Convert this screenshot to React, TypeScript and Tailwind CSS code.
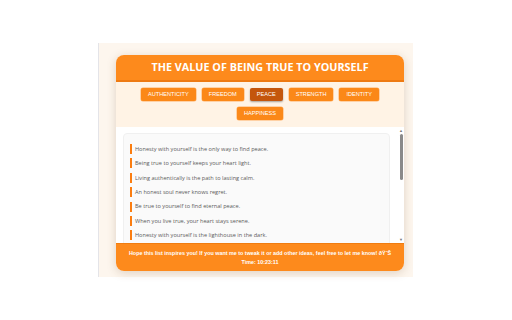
const TOPICS = ['Authenticity', 'Freedom', 'Peace', 'Strength', 'Identity', 'Happiness']

const LINES = [
  'Honesty with yourself is the only way to find peace.',
  'Being true to yourself keeps your heart light.',
  'Living authentically is the path to lasting calm.',
  'An honest soul never knows regret.',
  'Be true to yourself to find eternal peace.',
  'When you live true, your heart stays serene.',
  'Honesty with yourself is the lighthouse in the dark.',
]

function TopicButton({ label, active }: { label: string; active?: boolean }) {
  return (
    <button
      type="button"
      className={
        'h-[13px] rounded-[2px] px-[7px] text-[5.6px] uppercase leading-none text-white ' +
        (active
          ? 'bg-[#c4560c] shadow-[0_1px_2px_rgba(0,0,0,0.35)]'
          : 'bg-[#fb8818] shadow-[0_0_0_0.5px_#ffb066]')
      }
    >
      {label}
    </button>
  )
}

function Scrollbar() {
  return (
    <div className="flex w-[6px] shrink-0 flex-col items-center bg-white">
      <span className="mt-[1px] text-[4px] leading-[5px] text-[#777]">▲</span>
      <div className="mt-[1px] h-[46px] w-[3px] rounded-full bg-[#8a8a8a]" />
      <div className="flex-1" />
      <span className="mb-[1px] text-[4px] leading-[5px] text-[#777]">▼</span>
    </div>
  )
}

export default function App() {
  return (
    <div className="h-[320px] w-[512px] overflow-hidden bg-white pl-[98px] pt-[43px] [font-family:'Liberation_Sans',Arial,sans-serif]">
      <div className="h-[234px] w-[315px] border-l border-[#e4e4e8] bg-[#fdf6ee] pl-[17px] pt-[12px]">
        <div className="flex h-[216px] w-[288px] flex-col overflow-hidden rounded-[8px] bg-white shadow-[0_2px_10px_rgba(120,80,40,0.22)]">
          <header className="flex h-[27px] shrink-0 items-center justify-center border-b-2 border-[#ee7a12] bg-[#fd8a1c]">
            <h1 className="text-[10.8px] font-bold uppercase text-white [font-family:'Open_Sans',sans-serif]">
              The Value of Being True to Yourself
            </h1>
          </header>

          <div className="flex h-[45px] shrink-0 flex-wrap content-start justify-center gap-x-[6px] gap-y-[6px] bg-[#fff3e5] px-[20px] pt-[6px]">
            {TOPICS.map((t) => (
              <TopicButton key={t} label={t} active={t === 'Peace'} />
            ))}
          </div>

          <div className="flex h-[116px] shrink-0 overflow-hidden bg-white">
            <div className="flex-1 pl-[7px] pr-[8px] pt-[6px]">
              <ul className="flex flex-col gap-[4.4px] rounded-[4px] border border-[#f0f0f0] bg-[#fafafa] pl-[6px] pt-[10px] pb-[10px]">
                {LINES.map((l) => (
                  <li
                    key={l}
                    className="flex h-[10px] items-center border-l-2 border-[#fb7d10] pl-[3px] text-[5.6px] text-[#5a5a5a] [font-family:'Open_Sans',sans-serif]"
                  >
                    {l}
                  </li>
                ))}
              </ul>
            </div>
            <Scrollbar />
          </div>

          <footer className="flex flex-1 flex-col items-center justify-center border-t border-[#f07c10] bg-[#fd8a1c] text-[5.4px] font-bold leading-[9px] text-white">
            <p>Hope this list inspires you! If you want me to tweak it or add other ideas, feel free to let me know! ðŸ˜Š</p>
            <p>Time: 10:23:11</p>
          </footer>
        </div>
      </div>
    </div>
  )
}
